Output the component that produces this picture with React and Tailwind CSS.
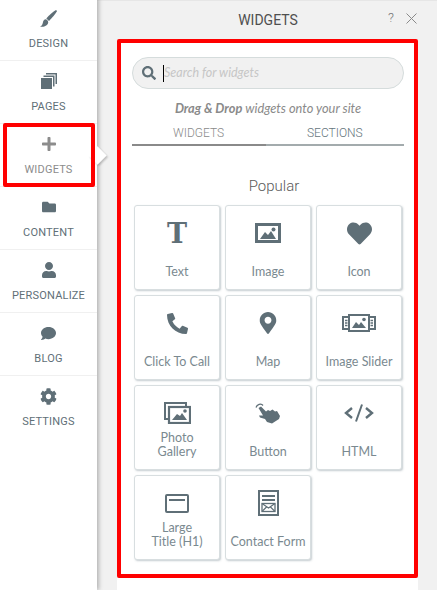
import { FaPlus, FaFolder, FaUser, FaComment, FaCog, FaSearch, FaHeart, FaMapMarkerAlt, FaPhoneAlt } from "react-icons/fa";

const Brush = () => (
  <svg width="17" height="17" viewBox="0 0 17 17" fill="#5f6f77">
    <path d="M15.500 .300C16.300 -.100 17.200 .700 16.800 1.500C15.500 4 12 8 9 11L6.300 8.500C9 5.500 13 1.800 15.500 .300z" />
    <path d="M5.300 9.300C7 9.500 8.300 11 8.200 12.500C7.800 15.500 4 17.500 0 16.500C1.800 15.800 2.300 14.800 2.800 13C3.200 11 3.800 9.800 5.300 9.300z" />
  </svg>
);

const Pages = () => (
  <svg width="16" height="16" viewBox="0 0 16 16" fill="#5f6f77">
    <path d="M5 0h11v11h-1.500V1.500H5z" />
    <path d="M2.500 2.500h11v11H12V4H2.500z" />
    <rect x="0" y="5" width="11" height="11" />
  </svg>
);

const Picture = () => (
  <svg width="26" height="20" viewBox="0 0 26 20">
    <rect x="1.500" y="1.500" width="23" height="17" fill="none" stroke="#5f6f77" strokeWidth="3" />
    <path d="M5 16l5-7 3 3 3-4 5 8z" fill="#5f6f77" />
    <circle cx="18.500" cy="6.500" r="2" fill="#5f6f77" />
  </svg>
);

const Slider = () => (
  <svg width="34" height="18" viewBox="0 0 34 18">
    <rect x="1" y="3" width="32" height="12" fill="none" stroke="#5f6f77" strokeWidth="2" />
    <rect x="7" y="1" width="20" height="16" fill="#fff" stroke="#5f6f77" strokeWidth="2" />
    <path d="M10 14l4-6 3 3 2-3 5 6z" fill="#5f6f77" />
    <circle cx="22" cy="5.500" r="1.800" fill="#5f6f77" />
    <path d="M3 6.500h2.500M3 9h2.500M3 11.500h2.500M28.500 6.500H31M28.500 9H31M28.500 11.500H31" stroke="#5f6f77" strokeWidth="1.300" />
  </svg>
);

const Gallery = () => (
  <svg width="27" height="22" viewBox="0 0 27 22">
    <path d="M4 17H1V1h21v3" fill="none" stroke="#5f6f77" strokeWidth="2" />
    <rect x="5" y="5" width="21" height="16" fill="#fff" stroke="#5f6f77" strokeWidth="2.200" />
    <path d="M8 18l5-6 3 2 2-3 5 7z" fill="#5f6f77" />
    <circle cx="21" cy="9" r="1.800" fill="#5f6f77" />
  </svg>
);

const Tap = () => (
  <svg width="26" height="22" viewBox="0 0 26 22" fill="#5f6f77">
    <path d="M1 5.500C2 2.500 6 1 8 3.500" fill="none" stroke="#5f6f77" strokeWidth="1.300" />
    <path d="M3.500 6L6 4.500L11 9.500L13 8L15 9L17.500 7.500L20 9.500L22 9L25 14L24 17L17 21.500L12 20L10 17L5 15.500L4 13.500L8 13.500z" />
  </svg>
);

const Code = () => (
  <svg width="30" height="18" viewBox="0 0 30 18" fill="none" stroke="#5f6f77" strokeWidth="2.400">
    <path d="M8 4L2 9l6 5M22 4l6 5-6 5" />
    <path d="M18 .500L12 17.500" strokeWidth="2" />
  </svg>
);

const Title = () => (
  <svg width="24" height="19" viewBox="0 0 24 19" fill="none" stroke="#5f6f77">
    <rect x="1" y="1" width="22" height="17" rx="1" strokeWidth="2" />
    <path d="M4 6h16" strokeWidth="2" />
  </svg>
);

const Form = () => (
  <svg width="21" height="26" viewBox="0 0 21 26" fill="none" stroke="#5f6f77">
    <rect x="1" y="1" width="19" height="24" strokeWidth="2" />
    <path d="M4 6h13M4 10h13" strokeWidth="2" />
    <rect x="4" y="13.500" width="13" height="8" strokeWidth="1.300" />
    <path d="M4 13.500l6.500 4.500 6.500-4.500M4 21.500l5-5M17 21.500l-5-5" strokeWidth="1.200" />
  </svg>
);

const Close = () => (
  <svg width="11" height="11" viewBox="0 0 11 11" fill="none" stroke="#8a8a8a" strokeWidth="1">
    <path d="M.500 .500l10 10M10.500 .500l-10 10" />
  </svg>
);

const nav = [
  { label: "DESIGN", icon: <Brush /> },
  { label: "PAGES", icon: <Pages /> },
  { label: "WIDGETS", icon: <FaPlus size={16} />, active: true },
  { label: "CONTENT", icon: <FaFolder size={14} /> },
  { label: "PERSONALIZE", icon: <FaUser size={16} /> },
  { label: "BLOG", icon: <FaComment size={15} /> },
  { label: "SETTINGS", icon: <FaCog size={17} /> },
];

const widgets = [
  { label: "Text", icon: <span className="font-['DejaVu_Serif',serif] font-bold text-[27px] leading-none">T</span> },
  { label: "Image", icon: <Picture /> },
  { label: "Icon", icon: <FaHeart size={25} /> },
  { label: "Click To Call", icon: <FaPhoneAlt size={21} /> },
  { label: "Map", icon: <FaMapMarkerAlt size={22} /> },
  { label: "Image Slider", icon: <Slider /> },
  { label: "Photo Gallery", icon: <Gallery />, wrap: true },
  { label: "Button", icon: <Tap /> },
  { label: "HTML", icon: <Code /> },
  { label: "Large Title (H1)", icon: <Title />, wrap: true },
  { label: "Contact Form", icon: <Form /> },
];

export default function App() {
  return (
    <div className="w-[437px] h-[590px] overflow-hidden flex bg-[#f1f1f1] font-['Lato',sans-serif]">
      <aside className="w-[97px] shrink-0 bg-white shadow-[2px_0_4px_rgba(0,0,0,0.25)] z-10 flex flex-col -mt-[2px] font-['Roboto',sans-serif]">
        {nav.map((item, i) => (
          <div
            key={item.label}
            className={`relative h-[63px] shrink-0 flex flex-col items-center ${i < 6 ? "border-b border-[#f0f0f0]" : ""} ${item.active ? "text-[#8c8c8c]" : "text-[#5f6f77]"}`}
          >
            <div className="mt-[11px] h-[18px] flex items-center justify-center">{item.icon}</div>
            <div className="mt-[10px] text-[11px] leading-[13px] tracking-[0.2px]">{item.label}</div>
            {item.active && (
              <>
                <div className="absolute left-[3px] top-[-1px] w-[92px] h-[64px] border-4 border-[#ff0000] rounded-[2px]" />
                <div className="absolute right-[-7px] top-[25px] w-[13px] h-[13px] rotate-45 bg-white shadow-[2px_0_2px_rgba(0,0,0,0.2)] -z-10" />
              </>
            )}
          </div>
        ))}
      </aside>

      <main className="flex-1 min-w-0 flex flex-col">
        <header className="relative h-[39px] shrink-0 flex items-center justify-center pl-[2px] border-t border-[#e6e6e6] text-[#4f4f4f] font-['Roboto',sans-serif] text-[14px]">
          WIDGETS
          <span className="absolute right-[43px] top-[9px] text-[13px] leading-[16px] font-light text-[#777]">?</span>
          <div className="absolute right-[20px] top-[12px] leading-none"><Close /></div>
        </header>

        <div className="ml-[20px] w-[301px] h-[539px] shrink-0 bg-white border-4 border-[#ff0000] rounded-[2px] pl-[11px] pr-[10px] pt-[14px]">
          <div className="h-[32px] rounded-full bg-[#f1f1f1] border border-[#d5dcdc] flex items-center pl-[9px]">
            <FaSearch size={14} className="text-[#5f6f77]" />
            <div className="ml-[7px] w-px h-[17px] bg-black" />
            <span className="italic text-[12.500px] text-[#c6c6c6] pt-[1px]">Search for widgets</span>
          </div>

          <p className="mt-[11px] text-center italic text-[12.800px] leading-[16px] text-[#8a8a8a]">
            <b>Drag &amp; Drop</b> widgets onto your site
          </p>

          <div className="mt-[7px] flex font-['Roboto',sans-serif] text-[12px] leading-[20px] font-light">
            <div className="w-[134px] h-[23px] border-b-2 border-[#8a8a8a] text-[#8a8a8a] pl-[41px]">WIDGETS</div>
            <div className="flex-1 h-[23px] border-b-2 border-[#a3abad] text-[#66767d] pl-[41px]">SECTIONS</div>
          </div>

          <h3 className="mt-[30px] text-center text-[15px] leading-[20px] text-[#5a5a5a] font-['Roboto',sans-serif] font-light pl-[12px]">Popular</h3>

          <div className="mt-[9px] ml-[2px] grid grid-cols-[86px_86px_86px] auto-rows-[85px] gap-[5px]">
            {widgets.map((w) => (
              <div
                key={w.label}
                className="relative rounded-[3px] border border-[#d8dee0] shadow-[1px_1px_2px_rgba(90,110,120,0.35)] bg-white flex flex-col items-center text-[#5f6f77]"
              >
                <div className="flex items-center justify-center h-[30px] mt-[12px]">{w.icon}</div>
                <div className={`absolute inset-x-0 bottom-[10px] text-center text-[12.500px] leading-[14px] text-[#7a8990] ${w.wrap ? "px-[14px]" : ""}`}>
                  {w.label}
                </div>
              </div>
            ))}
          </div>
        </div>

        <div className="ml-[20px] w-[301px] flex-1 bg-white" />
      </main>
    </div>
  );
}
